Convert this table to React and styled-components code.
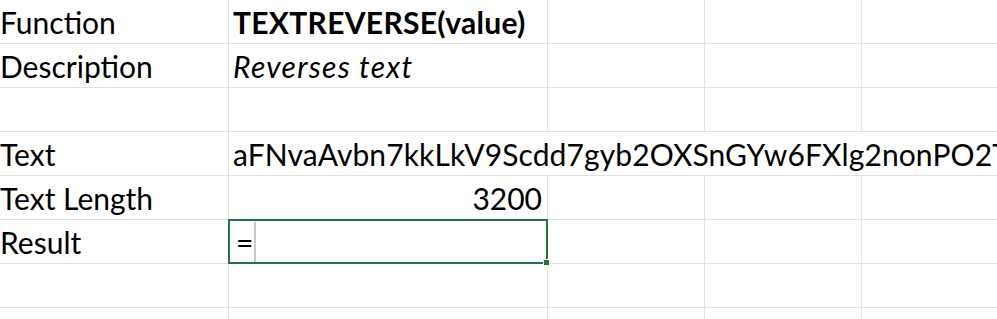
import styled, { createGlobalStyle } from 'styled-components'

const GlobalStyle = createGlobalStyle`
    html, body {
        margin: 0;
        padding: 0;
        background: #fff;
        overflow: hidden;
    }
`;

const rows = [
    { label: 'Function', value: 'TEXTREVERSE(value)', kind: 'bold' },
    { label: 'Description', value: 'Reverses text', kind: 'italic' },
    { label: '', value: '' },
    { label: 'Text', value: 'aFNvaAvbn7kkLkV9Scdd7gyb2OXSnGYw6FXlg2nonPO2TqhE8mRz4Ukc', kind: 'overflow' },
    { label: 'Text Length', value: '3200', kind: 'number' },
    { label: 'Result', value: '=', kind: 'edit' },
    { label: '', value: '' },
    { label: '', value: '' },
]

export default function App() {
    return (
        <>
            <GlobalStyle />
            <Sheet>
                {rows.map((row, i) => (
                    <Row key={i}>
                        <Cell>{row.label}</Cell>
                        {row.kind === 'overflow' ? (
                            <OverflowCell>{row.value}</OverflowCell>
                        ) : row.kind === 'edit' ? (
                            <>
                                <EditCell>
                                    <span>{row.value}</span>
                                    <Caret />
                                    <FillHandle />
                                </EditCell>
                                <Cell />
                                <Cell />
                                <Cell />
                            </>
                        ) : (
                            <>
                                <Cell $kind={row.kind}>{row.value}</Cell>
                                <Cell />
                                <Cell />
                                <Cell />
                            </>
                        )}
                    </Row>
                ))}
            </Sheet>
        </>
    )
}

const Sheet = styled.div`
    width: 997px;
    height: 319px;
    overflow: hidden;
    font-family: Lato, "Open Sans", sans-serif;
    font-size: 30px;
    color: #000;
`;
const Row = styled.div`
    display: grid;
    grid-template-columns: 229px 319px 157px 157px 200px;
    height: 44px;
`;
const Cell = styled.div`
    box-sizing: border-box;
    border-right: 1px solid #e8e3df;
    border-bottom: 1px solid #e1e1e1;
    line-height: 44px;
    white-space: nowrap;
    overflow: hidden;
    font-weight: ${p => (p.$kind === 'bold' ? 700 : 400)};
    font-style: ${p => (p.$kind === 'italic' ? 'italic' : 'normal')};
    letter-spacing: ${p => (p.$kind === 'italic' ? '1.3px' : p.$kind === 'bold' ? '0.3px' : '0')};
    text-align: ${p => (p.$kind === 'number' ? 'right' : 'left')};
    padding-left: ${p => (p.$kind ? '4px' : '0')};
    padding-right: ${p => (p.$kind === 'number' ? '5px' : '2px')};
`;
const OverflowCell = styled.div`
    grid-column: 2 / -1;
    box-sizing: border-box;
    border-bottom: 1px solid #e1e1e1;
    padding-left: 4px;
    line-height: 44px;
    letter-spacing: 0.1px;
    white-space: nowrap;
    overflow: hidden;
`;
const EditCell = styled.div`
    position: relative;
    box-sizing: border-box;
    margin: -1px 0 0 -1px;
    height: 45px;
    border: 2px solid #217346;
    display: flex;
    align-items: center;
    padding-left: 6px;
    line-height: 40px;
`;
const Caret = styled.div`
    width: 2px;
    height: 40px;
    margin-left: 1px;
    background: #c8c8c8;
`;
const FillHandle = styled.div`
    position: absolute;
    right: -4px;
    bottom: -4px;
    width: 5px;
    height: 5px;
    background: #217346;
    border: 1px solid #fff;
`;
